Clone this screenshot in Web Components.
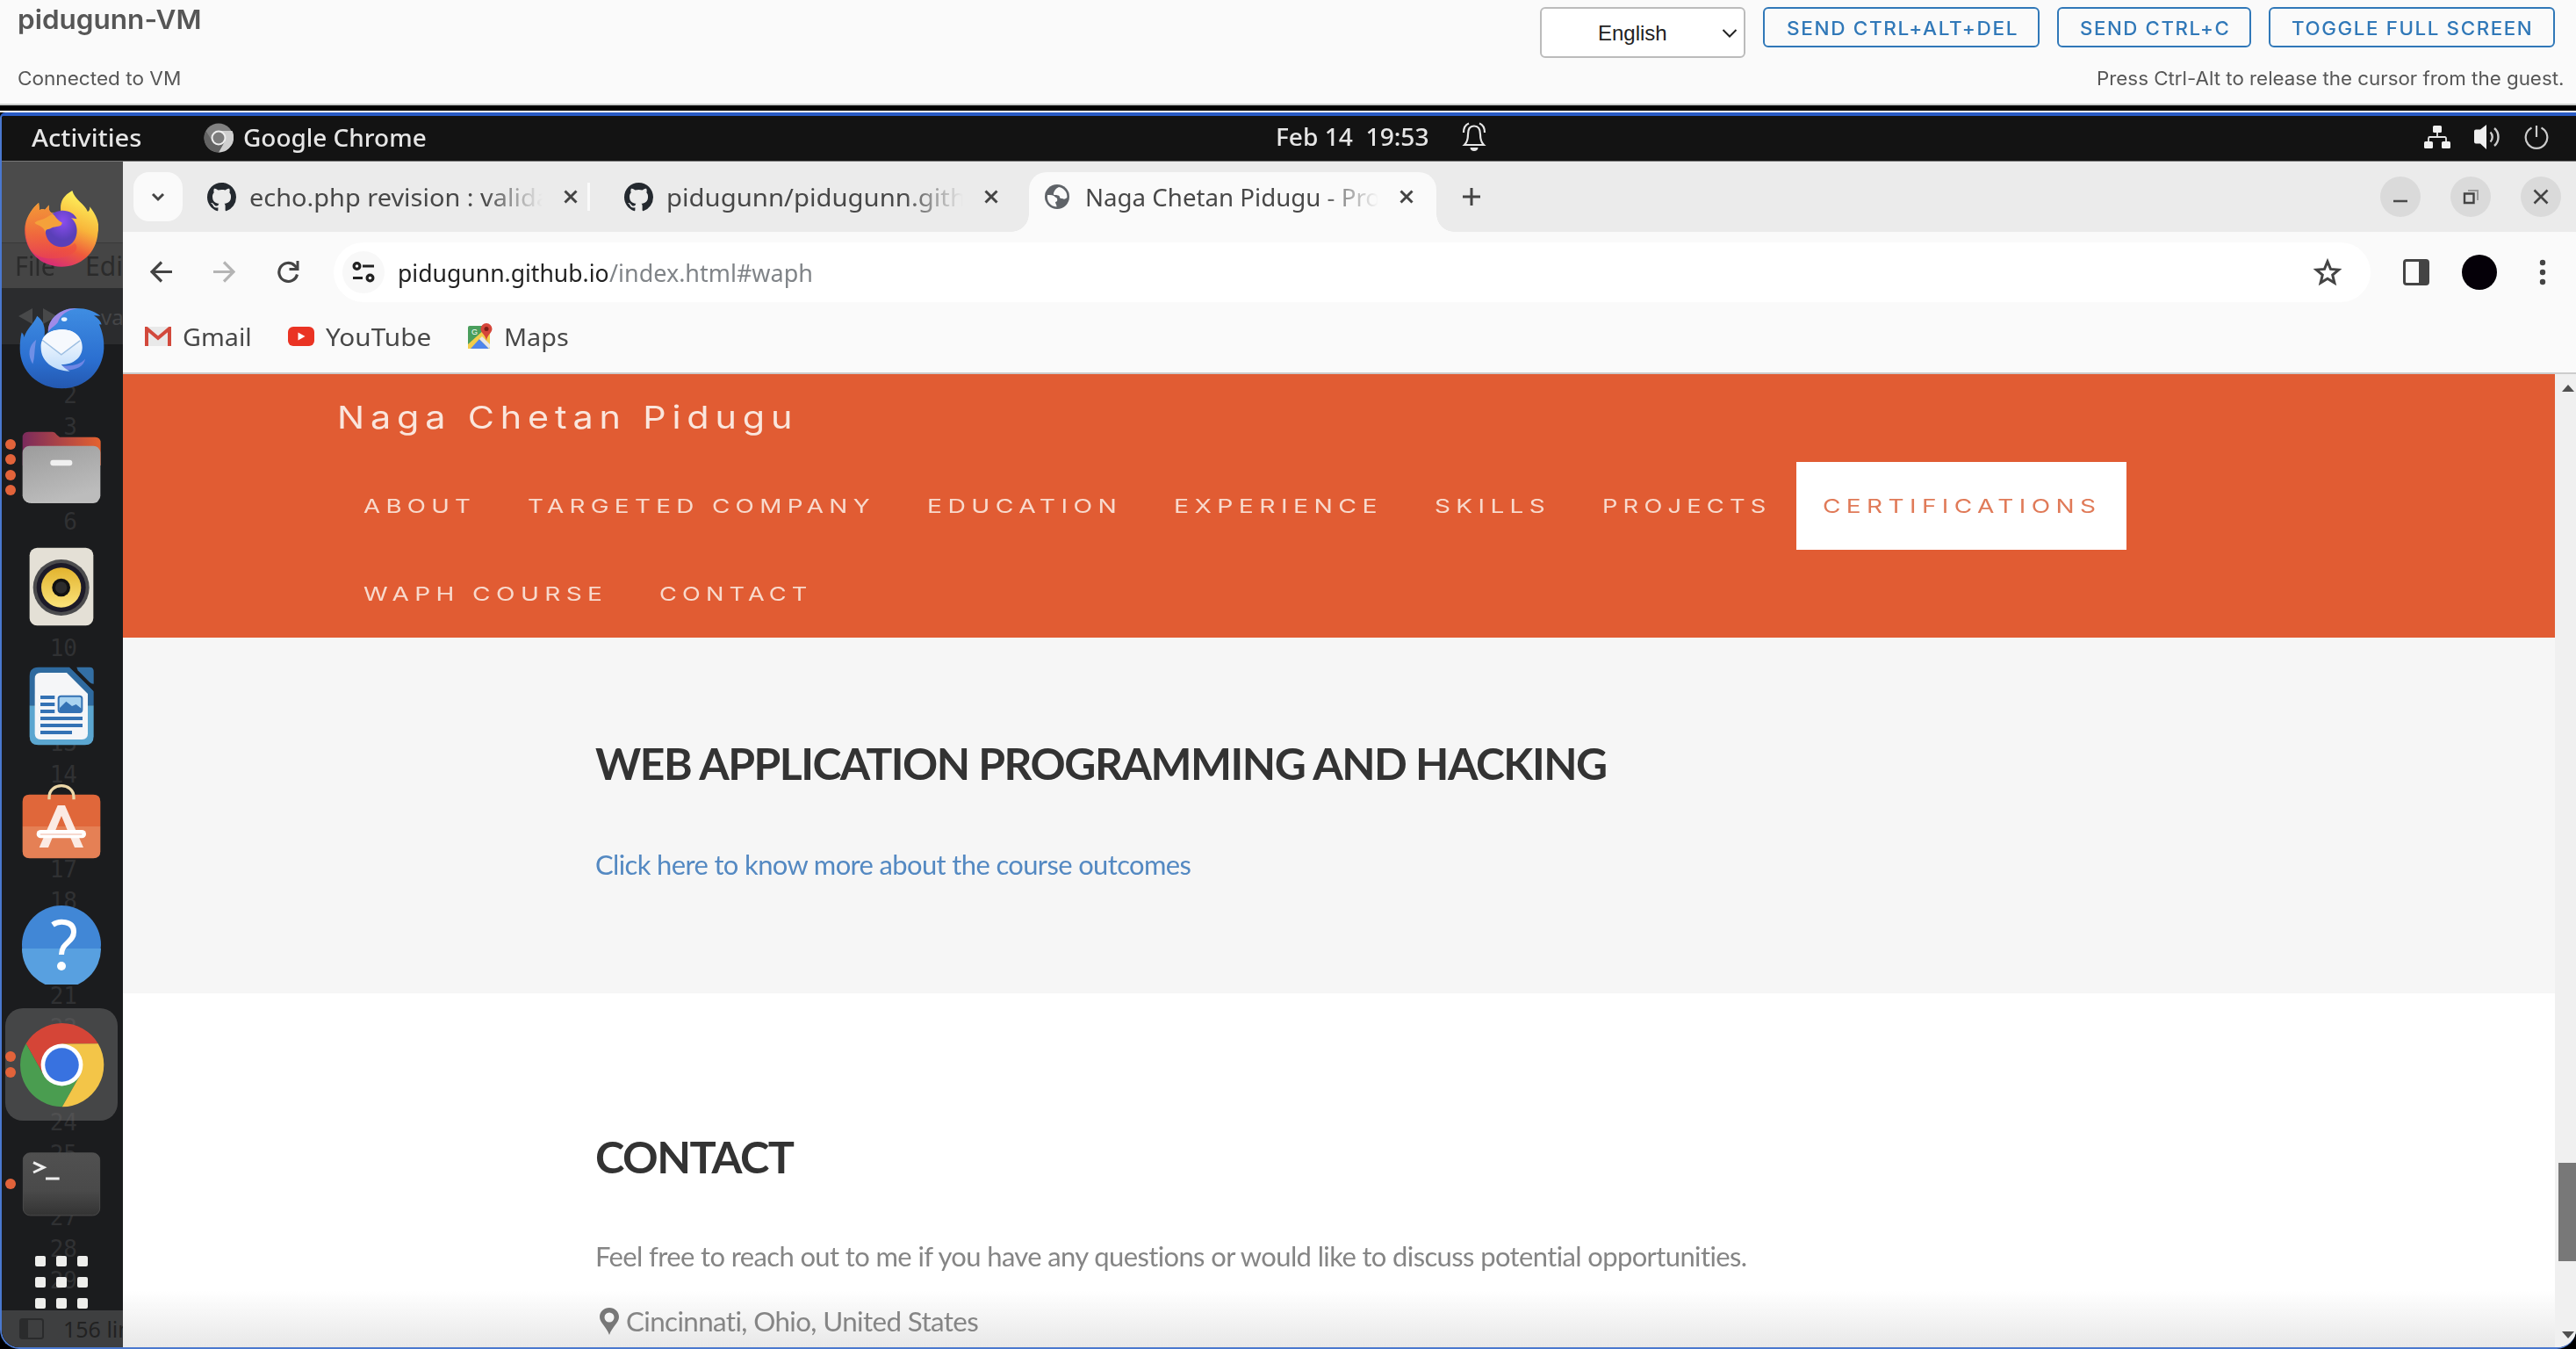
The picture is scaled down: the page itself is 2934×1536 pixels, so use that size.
<!DOCTYPE html>
<html lang="en">
<head>
<meta charset="utf-8">
<title>pidugunn-VM</title>
<style>
html,body{margin:0;padding:0;background:#000;overflow:hidden}
body{width:2934px;height:1536px;font-family:"Noto Sans",sans-serif}
</style>
</head>
<body>
<vm-console></vm-console>
<script>
const ICONS = {
  chevron:[16,12,'0 0 16 12','<path d="M2 3l6 6 6-6" fill="none" stroke="#444" stroke-width="3"/>'],
  selchev:[18,12,'0 0 18 12','<path d="M1.5 2L9 9.500 16.500 2" fill="none" stroke="#222" stroke-width="2"/>'],
  github:[33,33,'0 0 16 16','<path fill="#24292f" d="M8 0C3.58 0 0 3.58 0 8c0 3.54 2.29 6.53 5.47 7.59.4.07.55-.17.55-.38 0-.19-.01-.82-.01-1.49-2.01.37-2.53-.49-2.69-.94-.09-.23-.48-.94-.82-1.13-.28-.15-.68-.52-.01-.53.63-.01 1.08.58 1.23.82.72 1.21 1.87.87 2.33.66.07-.52.28-.87.51-1.07-1.78-.2-3.64-.89-3.64-3.95 0-.87.31-1.59.82-2.15-.08-.2-.36-1.02.08-2.12 0 0 .67-.21 2.2.82.64-.18 1.32-.27 2-.27s1.36.09 2 .27c1.53-1.04 2.2-.82 2.2-.82.44 1.1.16 1.92.08 2.12.51.56.82 1.27.82 2.15 0 3.07-1.87 3.75-3.65 3.95.29.25.54.73.54 1.48 0 1.07-.01 1.93-.01 2.2 0 .21.15.46.55.38A8.01 8.01 0 0 0 16 8c0-4.42-3.58-8-8-8z"/>'],
  globe:[28,28,'0 0 28 28','<circle cx="14" cy="14" r="14" fill="#5f6368"/><path d="M3 12C7 12 10 12 12 14.500C15 15 15 20 12 20C12 22 13.500 23 13.500 25.500C6 25 2 19 3 12ZM16 3C12 5 11 7 10 10C9.500 13 12 12 15 12.500C18 13 16 16 19 16C21 16 22 18 25.300 15C26 9 22 4 16 3Z" fill="#fafafa"/>'],
  close:[16,16,'0 0 16 16','<path d="M1.500 1.500l13 13M14.500 1.500l-13 13" stroke="#444" stroke-width="3"/>'],
  plus:[20,20,'0 0 20 20','<path d="M10 0v20M0 10h20" stroke="#444" stroke-width="3"/>'],
  back:[25,25,'0 0 25 25','<path d="M25 12.500H3M13 1.500L2 12.500l11 11" fill="none" stroke="#444" stroke-width="3.200"/>'],
  forward:[25,25,'0 0 25 25','<path d="M0 12.500h22M12 1.500l11 11-11 11" fill="none" stroke="#b4b4b4" stroke-width="3.200"/>'],
  reload:[26,26,'0 0 26 26','<path d="M23.500 15.500A10.500 10.500 0 1 1 20.500 5.300L24 8.700" fill="none" stroke="#444" stroke-width="3.200"/><path d="M25.500 0v11h-11l0-3h8v-8z" fill="#444"/>'],
  tune:[26,24,'0 0 26 24','<g fill="none" stroke="#222" stroke-width="3.200"><circle cx="5.500" cy="5" r="3.400"/><path d="M12 5h13M1 18.500h11"/><circle cx="20.500" cy="18.500" r="3.400"/></g>'],
  star:[34,32,'0 0 34 32','<path d="M17 3.800l3.500 8.600 9.200.7-7 6 2.200 9-7.900-4.900-7.900 4.900 2.200-9-7-6 9.200-.7z" fill="none" stroke="#444" stroke-width="3"/>'],
  panel:[30,30,'0 0 30 30','<rect x="1.500" y="1.500" width="27" height="27" rx="2.500" fill="#fafafa" stroke="#444" stroke-width="3"/><path d="M18 1h11v28H18z" fill="#444"/>'],
  dots:[8,30,'0 0 8 30','<g fill="#444"><circle cx="4" cy="4" r="3.200"/><circle cx="4" cy="15" r="3.200"/><circle cx="4" cy="26" r="3.200"/></g>'],
  min:[46,46,'0 0 46 46','<circle cx="23" cy="23" r="23" fill="#dadada"/><path d="M15 28h16" stroke="#4a4a4a" stroke-width="2.400"/>'],
  max:[46,46,'0 0 46 46','<circle cx="23" cy="23" r="23" fill="#dadada"/><path d="M20 16h11v11" fill="none" stroke="#999" stroke-width="2"/><path d="M16 19.500h10.500V30H16z" fill="none" stroke="#444" stroke-width="2.400"/>'],
  wclose:[46,46,'0 0 46 46','<circle cx="23" cy="23" r="23" fill="#dadada"/><path d="M15.500 15.500l15 15M30.500 15.500l-15 15" stroke="#444" stroke-width="2.600"/>'],
  gmail:[30,22,'0 0 30 22','<rect x="1" width="28" height="22" rx="2" fill="#e9e9e9"/><path d="M2 22V2l13 11L28 2v20" fill="none" stroke="#d2493c" stroke-width="4"/>'],
  youtube:[30,22,'0 0 30 22','<rect width="30" height="22" rx="6" fill="#ea3323"/><path d="M11.500 6.500l8 4.500-8 4.500z" fill="#fff"/>'],
  maps:[30,30,'0 0 30 30','<rect x="1" y="3" width="25" height="26" rx="2" fill="#4a9e5c"/><path d="M1 24L21 6l5 5v16a2 2 0 0 1-2 2H1z" fill="#f3ce4b"/><path d="M4 29l10-11 11 11z" fill="#4f86ec"/><path d="M14 18l3-3 9 9v3l-1 2z" fill="#e8e8e8"/><text x="5" y="13" font-family="Liberation Sans" font-size="9" fill="#fff">G</text><path d="M22 0a6.500 6.500 0 0 1 6.500 6.500C28.500 11 23 13 22 20C21 13 15.500 11 15.500 6.500A6.500 6.500 0 0 1 22 0z" fill="#d5463a"/><circle cx="22" cy="6.500" r="2.500" fill="#7b1f17"/>'],
  graychrome:[34,34,'0 0 34 34','<circle cx="17" cy="17" r="16.500" fill="#818181"/><path d="M17 9h15.500A17 17 0 0 1 17 33.500L24 21z" fill="#cfcfcf"/><path d="M2.500 9L10 21l14 0-7 12.500A16.500 16.500 0 0 1 2.500 9z" fill="#636363"/><circle cx="17" cy="17" r="8.500" fill="#eee"/><circle cx="17" cy="17" r="6.500" fill="#7c7c7c"/>'],
  bell:[28,34,'0 0 28 34','<g fill="none" stroke="#e6e6e6" stroke-width="2.200"><path d="M3 26C6 23 7 20 7 14C7 8 9 4.500 14 4.500S21 8 21 14C21 20 22 23 25 26Z"/><path d="M2 12C2 7 4 3 8 1.500M26 12C26 7 24 3 20 1.500"/></g><path d="M9.500 29h9c0 2.500-2 4-4.500 4s-4.500-1.500-4.500-4z" fill="#e6e6e6"/>'],
  network:[30,26,'0 0 30 26','<g fill="#f0f0f0"><rect x="10" width="10" height="8" rx="1.500"/><rect y="18" width="10" height="8" rx="1.500"/><rect x="20" y="18" width="10" height="8" rx="1.500"/></g><path d="M15 8v5M5 18v-3.500a1.500 1.500 0 0 1 1.500-1.500h17a1.500 1.500 0 0 1 1.500 1.500V18" fill="none" stroke="#e6e6e6" stroke-width="1.800"/>'],
  volume:[30,28,'0 0 30 28','<path d="M0 7.500a2 2 0 0 1 2-2h5L14 0v28L7 21.500H2a2 2 0 0 1-2-2z" fill="#f0f0f0"/><path d="M18.500 8.500c3 3 3 8 0 11M23 4c6 5 6 15 0 20" fill="none" stroke="#ccc" stroke-width="2.400"/>'],
  power:[28,28,'0 0 28 28','<path d="M14 1v13M8.500 3.500A12.300 12.300 0 1 0 19.500 3.500" fill="none" stroke="#ccc" stroke-width="2.200"/>'],
  pin:[22,31,'0 0 22 31','<path fill-rule="evenodd" fill="#777" d="M11 0C17 0 22 4.500 22 10.500C22 17 14 22 11 31C8 22 0 17 0 10.500C0 4.500 5 0 11 0ZM11 5.500a5.500 5.500 0 1 0 0 11 5.500 5.500 0 0 0 0-11z"/>'],
  up:[14,8,'0 0 14 8','<path d="M7 0l7 8H0z" fill="#505050"/>'],
  down:[14,8,'0 0 14 8','<path d="M7 8l7-8H0z" fill="#505050"/>'],
  navarrows:[42,18,'0 0 42 18','<path d="M0 9L16 0v18zM28 0v18l16-9z" fill="#48494a"/>'],
  sidebar:[28,24,'0 0 28 24','<rect x="1" y="1" width="26" height="22" rx="2.500" fill="none" stroke="#2a2b2c" stroke-width="2"/><path d="M1 1h9v22H1z" fill="#2a2b2c"/>'],
  firefox:[84,87,'84 105 252 262','<defs><linearGradient id="a" x1=".75" y1=".05" x2=".35" y2="1"><stop offset="0" stop-color="#fdf25c"/><stop offset=".4" stop-color="#f8b53a"/><stop offset=".7" stop-color="#ef5a3c"/><stop offset="1" stop-color="#d62a7a"/></linearGradient><linearGradient id="b" x1="0" y1="0" x2=".3" y2="1"><stop offset="0" stop-color="#f29a35"/><stop offset="1" stop-color="#ee4b43" stop-opacity=".6"/></linearGradient><radialGradient id="c" cx=".55" cy=".3"><stop offset="0" stop-color="#8a4df0"/><stop offset="1" stop-color="#5a3fb8"/></radialGradient></defs><path d="M132 147L135 172C146 167 152 168 152 172L167 155C166 170 168 178 178 182L208 178C204 148 212 125 247 105C256 138 290 150 300 177C306 175 308 168 307 160C338 200 340 225 335 250C330 320 275 366 210 366C140 366 84 315 84 240C84 200 110 165 132 147Z" fill="url(#a)"/><path d="M132 147L135 172C146 167 152 168 152 172L167 155C166 170 168 180 182 184L156 245C160 300 220 320 255 285C300 330 130 370 100 300C74 240 90 180 132 147Z" fill="url(#b)"/><path d="M155 240C155 200 175 176 208 174C235 172 255 185 263 202L243 199C265 215 268 250 256 272C240 302 200 305 178 288C162 276 155 260 155 240Z" fill="url(#c)"/><path d="M118 216C125 205 150 208 178 184C190 190 190 203 212 215C212 232 190 226 176 233C165 240 155 235 155 250C150 225 125 225 118 216Z" fill="#f5a13a"/>'],
  thunderbird:[97,93,'64 514 292 280','<defs><linearGradient id="d" x1=".5" y1="0" x2=".5" y2="1"><stop offset="0" stop-color="#3f8de2"/><stop offset=".65" stop-color="#2b6fd0"/><stop offset="1" stop-color="#2458b0"/></linearGradient><linearGradient id="e" x1="0" y1="0" x2="0" y2="1"><stop offset="0" stop-color="#fff"/><stop offset="1" stop-color="#bfdcfa"/></linearGradient></defs><path d="M66 655C66 635 68 615 72 600C79 606 80 612 80 617C90 585 110 575 125 543C148 560 154 585 150 612L163 598C162 555 205 516 255 517C290 516 320 525 342 543L320 542C335 552 343 562 346 573L338 572C350 600 355 625 354 655C350 735 290 792 210 792C130 792 66 735 66 655Z" fill="url(#d)"/><path d="M163 598C160 555 205 514 262 518C225 524 205 540 196 566C184 580 172 584 163 598Z" fill="#a08be8"/><path d="M110 708C92 680 95 645 122 625C115 655 118 685 110 708Z" fill="#6f8fe6"/><path d="M200 712C240 718 275 710 290 690C285 720 250 732 215 728Z" fill="#6e86e4"/><path d="M210 590C250 590 280 612 280 650C280 685 250 710 208 710C215 720 225 727 237 733C180 730 138 700 138 650C138 615 165 590 210 590Z" fill="url(#e)"/><path d="M143 624L208 674L272 626C262 600 240 590 210 590S154 600 143 624Z" fill="#f6f9fd"/><path d="M143 626L208 676L272 628" fill="none" stroke="#9dbfe2" stroke-width="4"/><ellipse cx="218" cy="555" rx="10" ry="7" fill="#e6f4ff"/>'],
  files:[90,82,'75 933 270 246','<defs><linearGradient id="f"><stop offset="0" stop-color="#7a2a5c"/><stop offset="1" stop-color="#e5622f"/></linearGradient><linearGradient id="g" x2=".4" y2="1"><stop offset="0" stop-color="#9c9c9c"/><stop offset="1" stop-color="#bcbcbc"/></linearGradient></defs><path d="M77 1050V955Q77 935 97 935H178Q188 935 194 945L204 953H325Q344 953 344 973V1050Z" fill="url(#f)"/><rect x="77" y="983" width="266" height="194" rx="24" fill="url(#g)"/><path d="M90 1172Q96 1177 104 1177H318Q328 1177 334 1172" fill="none" stroke="#d0d0d0" stroke-width="3"/><rect x="172" y="1031" width="75" height="20" rx="9" fill="#f0f0f0"/>'],
  rhythm:[74,90,'99 68 222 270','<defs><linearGradient id="h" x2="0" y2="1"><stop offset="0" stop-color="#e2b32e"/><stop offset="1" stop-color="#fbe37a"/></linearGradient></defs><rect x="101" y="70" width="218" height="266" rx="26" fill="#e4e0d6"/><circle cx="209" cy="206" r="96" fill="#4b4b4d"/><circle cx="209" cy="206" r="84" fill="#1c1a28"/><circle cx="209" cy="206" r="68" fill="url(#h)"/><circle cx="209" cy="206" r="31" fill="#111"/><circle cx="209" cy="206" r="20" fill="#2c2c2c"/>'],
  writer:[74,90,'99 477 222 270','<path d="M101 610V510Q101 479 132 479H237L320 560V610Z" fill="#2e6a9f"/><path d="M101 610H320V715Q320 745 290 745H131Q101 745 101 715Z" fill="#5ba6d0"/><path d="M240 477H321V562Z" fill="#1b1c1e"/><path d="M262 479H306Q320 479 320 493V536Q312 536 306 530L266 490Z" fill="#336fa4"/><path d="M119 518Q119 498 139 498H228L300 570V706Q300 726 280 726H139Q119 726 119 706Z" fill="#f5f6f8"/><g stroke="#3472b4" stroke-width="12"><path d="M138 582h49M138 606h49M138 630h49M138 654h144M138 678h144M138 702h108"/></g><rect x="200" y="578" width="80" height="55" rx="8" fill="#a9d3f0" stroke="#3472b4" stroke-width="6"/><path d="M204 630V618L226 596L246 612L260 606L278 620V630Z" fill="#3472b4"/>'],
  software:[90,86,'75 873 270 258','<path d="M101 911H319Q343 911 343 935V1020H77V935Q77 911 101 911Z" fill="#e0673a"/><path d="M77 1020H343V1105Q343 1129 319 1129H101Q77 1129 77 1105Z" fill="#e58055"/><path d="M168 928V920C168 868 252 868 252 920V928" fill="none" stroke="#ecd7a8" stroke-width="10"/><path d="M134 1092L197 948H222L285 1092H255L210 984L165 1092Z" fill="#fbeae3"/><rect x="125" y="1032" width="169" height="28" rx="14" fill="#fff"/><path d="M138 1047H280" stroke="#f4cdbf" stroke-width="4"/>'],
  help:[90,90,'0 0 90 90','<circle cx="45" cy="45" r="45" fill="#4187d6"/><path d="M0 49H90A45 45 0 0 1 0 49Z" fill="#58a0e0"/><path d="M35 22C42 17 59 17 59 30C59 42 45 42 45 56" fill="none" stroke="#fff" stroke-width="6"/><circle cx="45" cy="69" r="5" fill="#fff"/>'],
  chrome:[97,97,'64 370 292 292','<path d="M87 443A144 144 0 0 1 334 443L210 444L148 552Z" fill="#d54537"/><path d="M87 443L148 552H272L211 660A144 144 0 0 1 87 443Z" fill="#4a9d50"/><path d="M334 443L210 444L272 552L211 660A144 144 0 0 0 334 443Z" fill="#f3c548"/><circle cx="210" cy="516" r="72" fill="#fff"/><circle cx="210" cy="516" r="58" fill="#3872e0"/>'],
  terminal:[90,74,'75 812 270 222','<defs><linearGradient id="t" x2="0" y2="1"><stop offset="0" stop-color="#505050"/><stop offset=".6" stop-color="#4a4a4a"/><stop offset="1" stop-color="#333"/></linearGradient></defs><rect x="79" y="817" width="262" height="214" rx="24" fill="url(#t)" stroke="#5a5a5a" stroke-width="2"/><path d="M114 850L150 867L114 884" fill="none" stroke="#eee" stroke-width="9"/><path d="M156 905H203" stroke="#eee" stroke-width="9"/>'],
  grid:[60,60,'0 0 60 60','<g fill="#eeeeec"><rect width="12" height="12" rx="2"/><rect x="24" width="12" height="12" rx="2"/><rect x="48" width="12" height="12" rx="2"/><rect y="24" width="12" height="12" rx="2"/><rect x="24" y="24" width="12" height="12" rx="2"/><rect x="48" y="24" width="12" height="12" rx="2"/><rect y="48" width="12" height="12" rx="2"/><rect x="24" y="48" width="12" height="12" rx="2"/><rect x="48" y="48" width="12" height="12" rx="2"/></g>']
};

function define(name, html, setup) {
  customElements.define(name, class extends HTMLElement {
    connectedCallback() {
      if (this.shadowRoot) return;
      this.attachShadow({mode: 'open'}).innerHTML = typeof html === 'function' ? html(this) : html;
      if (setup) setup(this);
    }
  });
}

define('ui-icon', el => {
  const [w, h, vb, body] = ICONS[el.getAttribute('name')];
  return `<style>:host{display:block;flex:none;width:${w}px;height:${h}px}svg{display:block}</style><svg width="${w}" height="${h}" viewBox="${vb}">${body}</svg>`;
});

define('outline-button', `<style>:host{display:flex;box-sizing:border-box;height:46px;align-items:center;justify-content:center;border:2px solid #3078b8;border-radius:6px;color:#3078b8;font:500 21px Inter,sans-serif;letter-spacing:1.5px;padding-top:2px}</style><slot></slot>`);

define('vm-header', `<style>
:host{display:flex;flex-direction:column;box-sizing:border-box;height:120px;background:#fafafa;border-bottom:2px solid #c9cbca;color:#565656;font:400 21px/30px Inter,sans-serif;padding:8px 14px 0 20px}
.r{display:flex;align-items:flex-start;height:67px}
.n{font:600 30px/28px Inter,sans-serif}
.s{margin-left:auto;box-sizing:border-box;width:234px;height:58px;border:2px solid #bbb;border-radius:6px;background:#fff;display:flex;align-items:center;padding:2px 7px 0 64px;color:#222;font:24px/30px "Liberation Sans",Arial,sans-serif;justify-content:space-between;margin-right:20px}
.b{display:flex;gap:20px;margin-right:10px}
.g{display:flex;justify-content:space-between}
</style>
<div class="r"><fit-text w="210" class="n">pidugunn-VM</fit-text><div class="s"><fit-text w="79">English</fit-text><ui-icon name="selchev"></ui-icon></div>
<div class="b"><outline-button style="width:315px"><fit-text w="262">SEND CTRL+ALT+DEL</fit-text></outline-button><outline-button style="width:221px"><fit-text w="170">SEND CTRL+C</fit-text></outline-button><outline-button style="width:326px"><fit-text w="274">TOGGLE FULL SCREEN</fit-text></outline-button></div></div>
<div class="g"><fit-text w="186">Connected to VM</fit-text><fit-text w="532">Press Ctrl-Alt to release the cursor from the guest.</fit-text></div>`);

define('gnome-bar', `<style>
:host{display:flex;align-items:center;box-sizing:border-box;height:52px;background:#131313;border-bottom:1px solid #777;color:#e6e6e6;font:500 27px/48px "Noto Sans",sans-serif;padding:0 31px 1px 34px}
.t{display:flex;align-items:center;gap:27px;margin-left:auto}
.t,.i{margin-top:-2px}
</style>
<fit-text w="125">Activities</fit-text><ui-icon name="graychrome" style="margin:0 11px 0 71px"></ui-icon><fit-text w="209">Google Chrome</fit-text>
<fit-text w="175" style="margin:0 37px 0 967px;position:relative;top:-1px">Feb 14  19:53</fit-text><ui-icon class="i" name="bell"></ui-icon>
<div class="t"><ui-icon name="network"></ui-icon><ui-icon name="volume"></ui-icon><ui-icon name="power"></ui-icon></div>`);

define('dock-item', el => {
  const n = +el.getAttribute('dots') || 0;
  return `<style>:host{display:flex;height:136px;align-items:center;justify-content:center;position:relative}
:host([active])::before{content:"";position:absolute;inset:4px;border-radius:20px;background:rgba(112,112,112,.5)}
ui-icon{position:relative}
.d{position:absolute;left:4px;top:0;height:100%;display:flex;flex-direction:column;justify-content:center;gap:5.500px}
.d i{width:12px;height:12px;border-radius:50%;background:#e2633a}</style>
<div class="d">${'<i></i>'.repeat(n)}</div><ui-icon name="${el.getAttribute('icon')}"></ui-icon>`;
});

const lines = ['2','3','','','6','','','','10','','','13','14','','','17','18','','','21','22','','','24','25','','27','28','29','']
  .map(t => `<div>${t}</div>`).join('');

define('gnome-dock', `<style>
:host{display:block;flex:none;position:relative;width:138px;height:1350px;background:#1b1c1e;overflow:hidden}
.bg{position:absolute;inset:0;display:flex;flex-direction:column;color:#2b2b2b}
.a{height:92px;background:#4b4b4b;border-bottom:1px solid #3a3a3a}
.m{height:51px;background:#454545;display:flex;gap:34px;padding-left:15px;font-size:30px;line-height:52px;white-space:nowrap}
.t{height:64px;background:#2b2c2e;display:flex;align-items:center;gap:52px;padding-left:19px;color:#454648;font-size:24px}
.l{height:1100px;padding-top:40px;flex:none;font:26px/36px "DejaVu Sans Mono",monospace;color:#303133;text-align:right;width:86px}
.l div{height:36px}
.s{position:absolute;left:0;right:0;bottom:0;height:42px;background:#3e3f40;display:flex;align-items:center;gap:22px;padding-left:20px;font-size:25px;white-space:nowrap;color:#222}
.items{position:relative;padding-top:8px;width:136px}
</style>
<div class="bg"><div class="a"></div><div class="m"><fit-text w="46">File</fit-text><span>Edi</span></div><div class="t"><ui-icon name="navarrows"></ui-icon><span>va</span></div><div class="l">${lines}</div><div class="s"><ui-icon name="sidebar"></ui-icon><span>156 lin</span></div></div>
<div class="items"><dock-item icon="firefox"></dock-item><dock-item icon="thunderbird"></dock-item><dock-item icon="files" dots="4"></dock-item><dock-item icon="rhythm"></dock-item><dock-item icon="writer"></dock-item><dock-item icon="software" style="box-sizing:border-box;padding-bottom:10px"></dock-item><dock-item icon="help"></dock-item><dock-item icon="chrome" dots="2" active></dock-item><dock-item icon="terminal" dots="1"></dock-item><dock-item icon="grid" style="height:88px"></dock-item></div>`);

define('browser-tab', el => `<style>
:host{display:flex;align-items:center;box-sizing:border-box;width:438px;height:56px;flex:none;padding:0 0 0 16px;position:relative}
.x{width:338px;margin:0 24px 0 15px;overflow:hidden;white-space:nowrap;-webkit-mask:linear-gradient(90deg,#000 80%,transparent 100%);mask:linear-gradient(90deg,#000 80%,transparent 100%)}
:host([active]){width:464px;height:68px;background:#fafafa;border-radius:20px 20px 0 0;padding:0 0 12px 18px}
:host([active]) .x{margin-left:18px;width:334px}
:host([active])::before,:host([active])::after{content:"";position:absolute;bottom:0;width:20px;height:20px;left:-20px;background:radial-gradient(circle at 0 0,transparent 19.500px,#fafafa 20px)}
:host([active])::after{left:auto;right:-20px;background:radial-gradient(circle at 100% 0,transparent 19.500px,#fafafa 20px)}
</style><ui-icon name="${el.getAttribute('icon')}"></ui-icon><div class="x"><slot></slot></div><ui-icon name="close"></ui-icon>`);

define('tab-strip', `<style>
:host{display:flex;align-items:flex-start;height:68px;padding:12px 17px 0 12px;background:#ebebeb;color:#484848;font:400 28px/54px "Noto Sans",sans-serif}
.c{width:56px;height:56px;border-radius:18px;background:#fafafa;display:flex;align-items:center;justify-content:center;margin-right:12px}
.s{width:3px;height:32px;margin:12px 16px 0 11px;background:#fafafa}
.p{margin:18px 0 0 30px}
.w{display:flex;gap:34px;margin:5px 0 0 auto}
</style>
<div class="c"><ui-icon name="chevron"></ui-icon></div>
<browser-tab icon="github"><fit-text w="343">echo.php revision : valida</fit-text></browser-tab>
<div class="s"></div>
<browser-tab icon="github" style="margin-left:7px;width:442px"><fit-text w="341">pidugunn/pidugunn.gith</fit-text></browser-tab>
<browser-tab active icon="globe" style="margin-left:35px"><fit-text w="336">Naga Chetan Pidugu - Pro</fit-text></browser-tab>
<ui-icon class="p" name="plus"></ui-icon>
<div class="w"><ui-icon name="min"></ui-icon><ui-icon name="max"></ui-icon><ui-icon name="wclose"></ui-icon></div>`);

define('nav-toolbar', `<style>
:host{display:flex;align-items:center;box-sizing:border-box;height:92px;padding:0 34px 1px 31px;color:#222;font:28px/60px "Noto Sans",sans-serif;background:#fafafa}
.n{display:flex;gap:47px}
.o{display:flex;align-items:center;flex:none;box-sizing:border-box;width:2320px;height:68px;border-radius:34px;background:#fff;margin:0 37px 0 39px;padding:0 32px 0 10px}
.i{width:48px;height:48px;border-radius:50%;background:#f8f8f8;display:flex;align-items:center;justify-content:center;margin-right:15px}
.g{color:#808488}
.o>ui-icon{margin-left:auto}
.v{width:40px;height:40px;border-radius:50%;background:#050008;margin:0 48px 0 37px}
</style><div class="n"><ui-icon name="back"></ui-icon><ui-icon name="forward"></ui-icon><ui-icon name="reload"></ui-icon></div>
<div class="o"><div class="i"><ui-icon name="tune"></ui-icon></div><fit-text w="241">pidugunn.github.io</fit-text><fit-text w="232" class="g">/index.html#waph</fit-text><ui-icon name="star"></ui-icon></div>
<ui-icon name="panel"></ui-icon><div class="v"></div><ui-icon name="dots"></ui-icon>`);

define('bookmarks-bar', `<style>
:host{display:flex;align-items:center;box-sizing:border-box;height:70px;padding:0 0 14px 25px;color:#484848;font:28px/40px "Noto Sans",sans-serif;background:#fafafa;border-bottom:2px solid #ccc}
div{display:flex;align-items:center;gap:13px;margin-right:41px}
</style><div><ui-icon name="gmail"></ui-icon><fit-text w="79">Gmail</fit-text></div><div><ui-icon name="youtube"></ui-icon><fit-text w="120">YouTube</fit-text></div><div style="gap:12px"><ui-icon name="maps"></ui-icon><fit-text w="74">Maps</fit-text></div>`);

define('nav-link', `<style>:host{display:flex;align-items:center;height:100px;padding:0 35px 0 30px}:host([active]){background:#fff;color:#e07a58}</style><slot></slot>`);

define('site-nav', `<style>
:host{display:block;box-sizing:border-box;height:300px;background:#e15c33;color:#f8dacd;font:400 22px/40px Inter,sans-serif;letter-spacing:5px;padding-left:244px}
.b{height:98px;box-sizing:border-box;padding-top:22px;margin-bottom:2px;font:400 36px/54px Inter,sans-serif;letter-spacing:6px;color:#fae6dd}
.r{display:flex}
</style><div class="b"><fit-text w="518">Naga Chetan Pidugu</fit-text></div>
<div class="r"><nav-link><fit-text w="122">ABOUT</fit-text></nav-link><nav-link><fit-text w="390">TARGETED COMPANY</fit-text></nav-link><nav-link><fit-text w="216">EDUCATION</fit-text></nav-link><nav-link><fit-text w="232">EXPERIENCE</fit-text></nav-link><nav-link><fit-text w="126">SKILLS</fit-text></nav-link><nav-link><fit-text w="186">PROJECTS</fit-text></nav-link><nav-link active><fit-text w="311">CERTIFICATIONS</fit-text></nav-link></div>
<div class="r"><nav-link><fit-text w="272">WAPH COURSE</fit-text></nav-link><nav-link><fit-text w="169">CONTACT</fit-text></nav-link></div>`);

define('page-section', `<style>:host{display:flex;flex-direction:column;box-sizing:border-box;padding-left:538px;color:#858585;font:400 30px/40px Lato,sans-serif;letter-spacing:-.6px;font-variant-ligatures:none}
::slotted(h2){margin:0;color:#333;font:700 50px/60px Lato,sans-serif;letter-spacing:-1.500px}</style><slot></slot>`);

define('page-scrollbar', `<style>:host{display:flex;flex-direction:column;align-items:center;box-sizing:border-box;width:24px;background:#f0f0f0;padding:12px 0 10px 6px}
.t{width:20px;height:112px;background:#787878;align-self:flex-end;margin:878px 0 80px}</style><ui-icon name="up"></ui-icon><div class="t"></div><ui-icon name="down"></ui-icon>`);

define('chrome-window', `<style>
:host{display:flex;flex-direction:column;flex:1;min-width:0;background:#fff}
tab-strip{height:68px}
.v{display:flex;flex:1}
.p{width:2770px;display:flex;flex-direction:column}
.c{flex:1;background:linear-gradient(#fff 84%,#e8e8e8)}
a{color:#5489c2}
.l{display:flex;align-items:center;gap:8px;margin-top:34px;padding-left:5px}
</style><tab-strip></tab-strip><nav-toolbar></nav-toolbar><bookmarks-bar></bookmarks-bar>
<div class="v"><div class="p"><site-nav></site-nav>
<page-section style="height:405px;background:#f6f6f6;padding-top:113px"><h2><fit-text w="1153">WEB APPLICATION PROGRAMMING AND HACKING</fit-text></h2><a style="margin-top:65px"><fit-text w="679">Click here to know more about the course outcomes</fit-text></a></page-section>
<page-section class="c" style="padding-top:156px"><h2><fit-text w="227">CONTACT</fit-text></h2><fit-text w="1312" style="margin-top:63px">Feel free to reach out to me if you have any questions or would like to discuss potential opportunities.</fit-text><div class="l"><ui-icon name="pin"></ui-icon><fit-text w="402">Cincinnati, Ohio, United States</fit-text></div></page-section></div>
<page-scrollbar></page-scrollbar></div>`);

define('vm-console', `<style>
:host{display:flex;flex-direction:column;width:2934px;height:1536px;background:#000}
.w{height:2px;margin-top:6px;background:#fff}
.d{box-sizing:border-box;height:1408px;border:solid #4a78cf;border-width:4px 0 2px 2px;border-top-color:#2a5cc5;border-radius:6px 0 22px 22px;overflow:hidden;display:flex;flex-direction:column}
.b{display:flex;flex:1;min-height:0}
</style><vm-header></vm-header><div class="w"></div><div class="d"><gnome-bar></gnome-bar><div class="b"><gnome-dock></gnome-dock><chrome-window></chrome-window></div></div>`);

// Stretches or condenses a line of text to the width given in "w".
define('fit-text', `<style>:host{display:block;flex:none}span{display:inline-block;white-space:pre;transform-origin:0 50%}</style><span><slot></slot></span>`, el => {
  const w = +el.getAttribute('w'), s = el.shadowRoot.querySelector('span');
  el.style.width = w + 'px';
  const ls = parseFloat(getComputedStyle(s).letterSpacing) || 0;
  s.style.transform = `scaleX(${w / (s.offsetWidth - ls)})`;
});
</script>
</body>
</html>
